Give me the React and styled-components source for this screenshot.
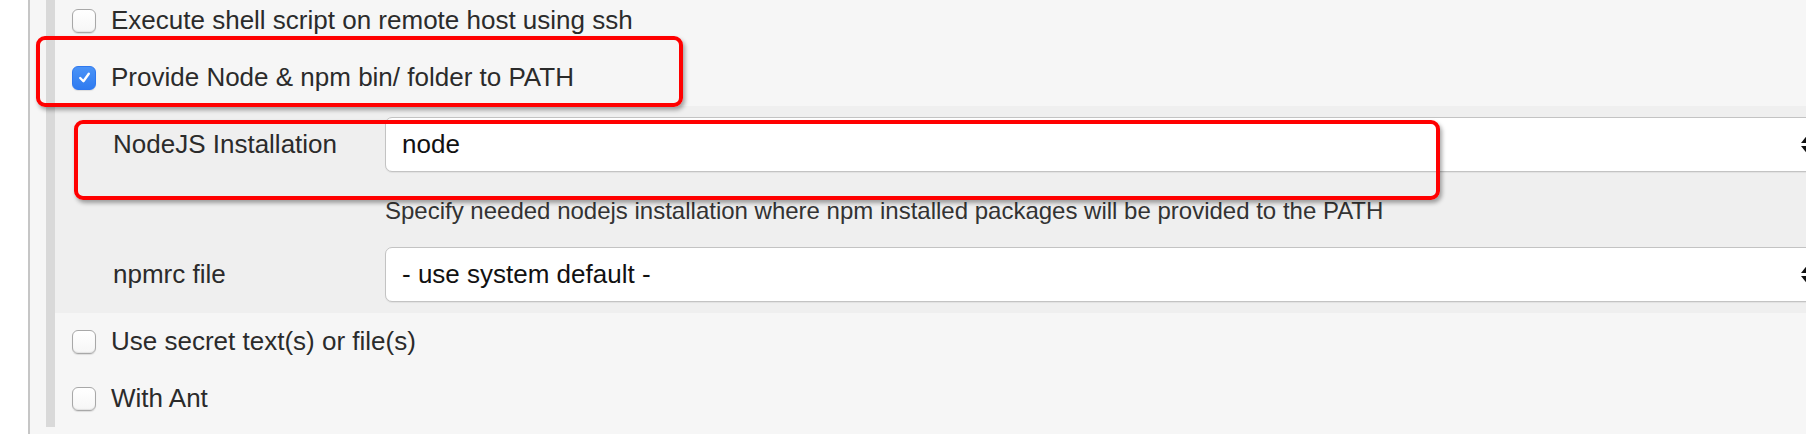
import React from "react";
import styled, { createGlobalStyle } from "styled-components";

const GlobalStyle = createGlobalStyle`
  html, body {
    margin: 0;
    padding: 0;
    background: #ffffff;
    overflow: hidden;
  }
  body {
    font-family: "Liberation Sans", Arial, Helvetica, sans-serif;
    color: #333333;
  }
`;

const Page = styled.div`
  position: relative;
  height: 434px;
  padding-left: 28px;
  display: flex;
  box-sizing: border-box;
`;

const Panel = styled.div`
  flex: 1;
  border-left: 2px solid #c6c6c6;
  background: #f6f6f6;
  padding-left: 16px;
`;

const Block = styled.div`
  margin-top: -8px;
  border-left: 9px solid #d9d9d9;
`;

const CheckRow = styled.label`
  height: 57px;
  display: flex;
  align-items: center;
  gap: 15px;
  padding-left: 17px;
  font-size: 26px;
  color: #2b2b2b;
  white-space: nowrap;
`;

const Box = styled.span`
  width: 24px;
  height: 24px;
  box-sizing: border-box;
  border-radius: 6px;
  display: inline-flex;
  align-items: center;
  justify-content: center;
  flex: none;
  border: 1px solid ${(p) => (p.$checked ? "#2f78ee" : "#a8a8a8")};
  background: ${(p) =>
    p.$checked
      ? "linear-gradient(#4a93f7, #2f7bf0)"
      : "linear-gradient(#ffffff, #f6f6f6)"};
  box-shadow: ${(p) =>
    p.$checked
      ? "0 1px 1px rgba(0,0,0,0.1)"
      : "inset 0 -1px 1px rgba(0,0,0,0.08), 0 1px 1px rgba(0,0,0,0.1)"};
`;

const Nested = styled.div`
  background: #efefef;
  padding: 11px 0 11px 58px;
  display: grid;
  grid-template-columns: 272px 1438px;
  align-items: center;
`;

const FieldLabel = styled.div`
  font-size: 26px;
  color: #2b2b2b;
  white-space: nowrap;
`;

const SelectBox = styled.div`
  height: 55px;
  box-sizing: border-box;
  border: 1px solid #c3c3c3;
  border-radius: 7px;
  background: #ffffff;
  box-shadow: 0 1px 1px rgba(0, 0, 0, 0.06);
  display: flex;
  align-items: center;
  justify-content: space-between;
  padding: 0 10px 0 16px;
  font-size: 26px;
  color: #111111;
  white-space: nowrap;
`;

const Help = styled.div`
  grid-column: 2;
  font-size: 24px;
  line-height: 28px;
  color: #333333;
  margin: 25px 0 22px;
  white-space: nowrap;
`;

const Highlight = styled.div`
  position: absolute;
  left: ${(p) => p.$left}px;
  top: ${(p) => p.$top}px;
  width: ${(p) => p.$w}px;
  height: ${(p) => p.$h}px;
  box-sizing: border-box;
  border: 4px solid #ff0000;
  border-radius: 9px;
  box-shadow: 2px 3px 4px rgba(0, 0, 0, 0.35);
  pointer-events: none;
`;

const Check = ({ checked }) => (
  <Box $checked={checked}>
    {checked && (
      <svg width="15" height="15" viewBox="0 0 14 14">
        <path
          d="M3 7.5 L6 10.5 L11 3.5"
          fill="none"
          stroke="#ffffff"
          strokeWidth="2.2"
          strokeLinecap="round"
          strokeLinejoin="round"
        />
      </svg>
    )}
  </Box>
);

const Arrows = () => (
  <svg width="11" height="17" viewBox="0 0 11 17">
    <path d="M5.5 0 L11 7 L0 7 Z" fill="#111" />
    <path d="M0 10 L11 10 L5.5 17 Z" fill="#111" />
  </svg>
);

const Select = ({ value }) => (
  <SelectBox>
    <span>{value}</span>
    <Arrows />
  </SelectBox>
);

export default function App() {
  return (
    <>
      <GlobalStyle />
      <Page>
        <Panel>
          <Block>
            <CheckRow>
              <Check />
              Execute shell script on remote host using ssh
            </CheckRow>
            <CheckRow>
              <Check checked />
              Provide Node &amp; npm bin/ folder to PATH
            </CheckRow>
            <Nested>
              <FieldLabel>NodeJS Installation</FieldLabel>
              <Select value="node" />
              <Help>
                Specify needed nodejs installation where npm installed packages
                will be provided to the PATH
              </Help>
              <FieldLabel>npmrc file</FieldLabel>
              <Select value="- use system default -" />
            </Nested>
            <CheckRow>
              <Check />
              Use secret text(s) or file(s)
            </CheckRow>
            <CheckRow>
              <Check />
              With Ant
            </CheckRow>
          </Block>
        </Panel>
        <Highlight $left={36} $top={36} $w={647} $h={71} />
        <Highlight $left={74} $top={120} $w={1366} $h={80} />
      </Page>
    </>
  );
}
